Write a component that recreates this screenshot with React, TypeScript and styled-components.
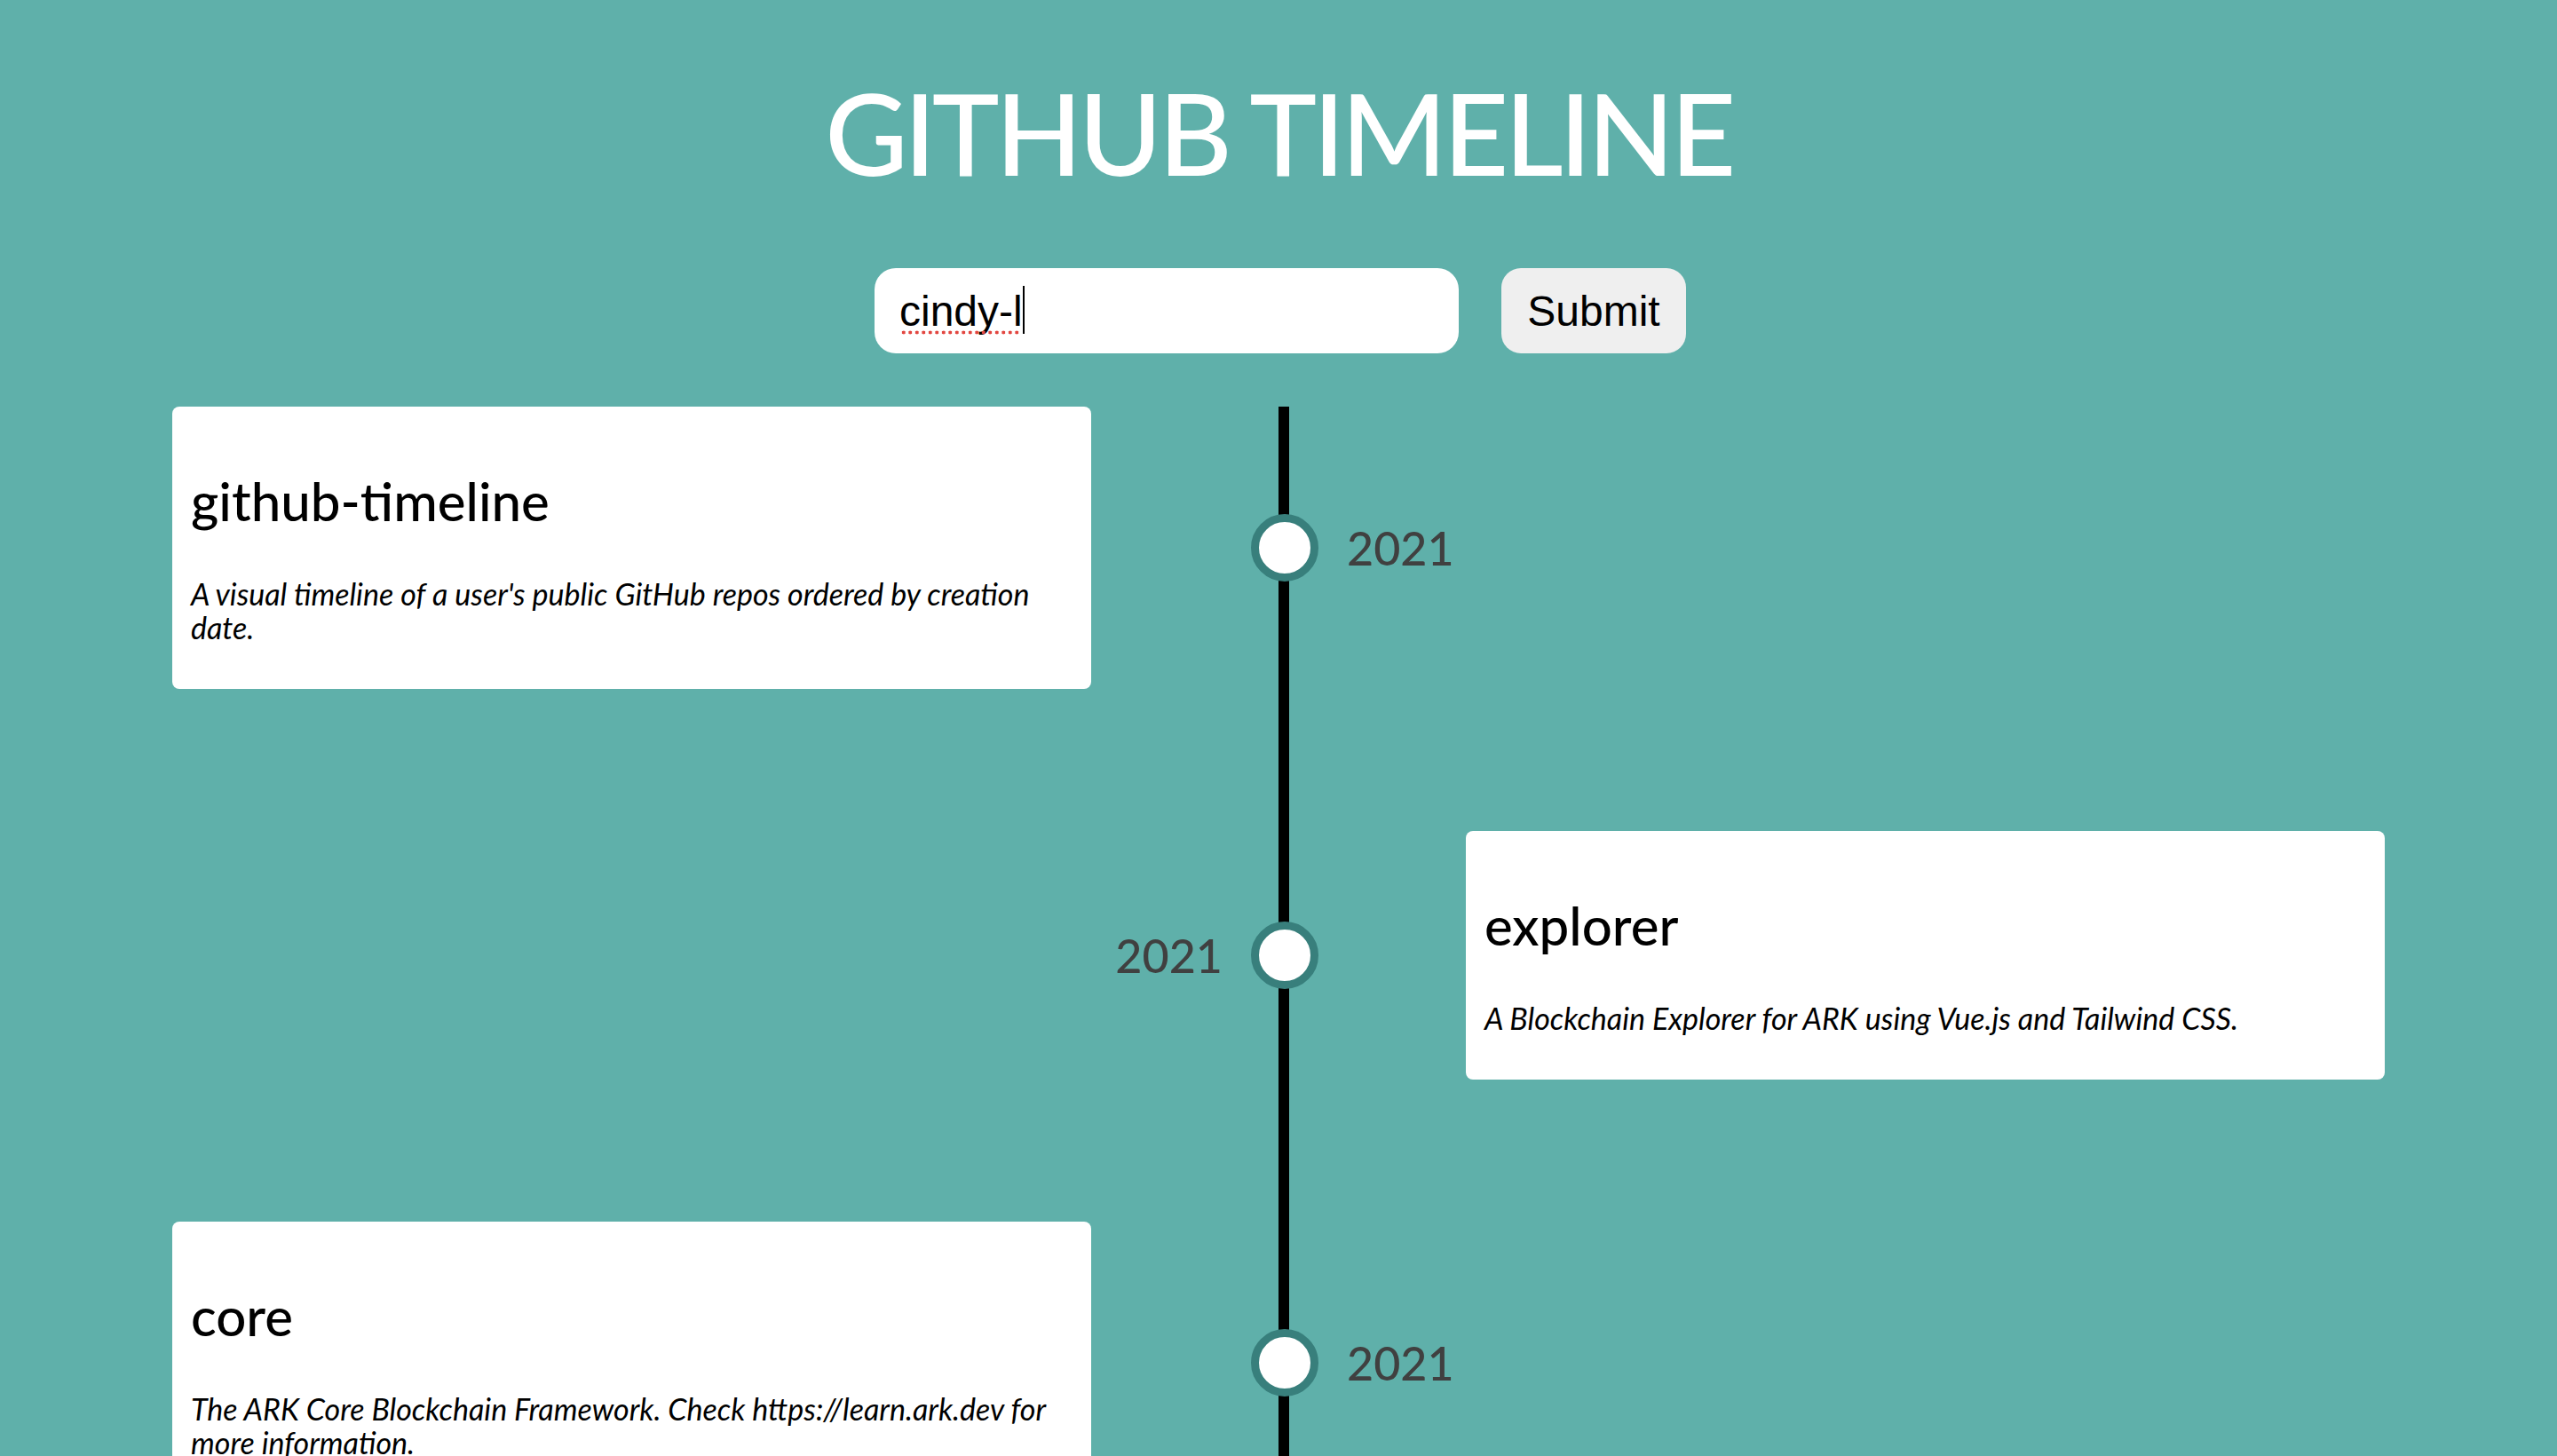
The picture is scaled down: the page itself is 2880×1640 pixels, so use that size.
import React from 'react';
import styled, { createGlobalStyle } from 'styled-components';

interface Repo {
    name: string;
    description: string;
    year: number;
}

const repos: Repo[] = [
    {
        name: 'github-timeline',
        description: "A visual timeline of a user's public GitHub repos ordered by creation date.",
        year: 2021,
    },
    {
        name: 'explorer',
        description: 'A Blockchain Explorer for ARK using Vue.js and Tailwind CSS.',
        year: 2021,
    },
    {
        name: 'core',
        description: 'The ARK Core Blockchain Framework. Check https://learn.ark.dev for more information.',
        year: 2021,
    },
];

const GlobalStyle = createGlobalStyle`
    html, body {
        margin: 0;
        padding: 0;
        background: #5fb0aa;
    }
    body {
        font-family: Lato, "Open Sans", sans-serif;
        overflow: hidden;
    }
`;

const Page = styled.div`
    min-height: 1640px;
    padding-top: 72px;
    box-sizing: border-box;
`;

const Title = styled.h1`
    margin: 0;
    text-align: center;
    color: #ffffff;
    font-size: 128px;
    line-height: 154px;
    font-weight: 500;
    letter-spacing: -4.5px;
`;

const SearchForm = styled.form`
    display: flex;
    justify-content: center;
    gap: 48px;
    margin: 76px 0 60px;
    padding-left: 4px;
`;

const InputWrap = styled.div`
    position: relative;
`;

const SearchInput = styled.input`
    display: block;
    width: 658px;
    height: 96px;
    box-sizing: border-box;
    border: none;
    border-radius: 24px;
    padding: 0 28px;
    font-family: "Liberation Sans", Arial, sans-serif;
    font-size: 48px;
    color: #000;
    background: #fff;
    outline: none;
    caret-color: transparent;
`;

// spell-check dots under the typed name
const Squiggle = styled.span`
    position: absolute;
    left: 29px;
    top: 70px;
    width: 136px;
    height: 5px;
    background-image: radial-gradient(circle, #e2453f 1.8px, transparent 2.2px);
    background-size: 7.5px 5px;
    pointer-events: none;
`;

const Caret = styled.span`
    position: absolute;
    left: 167px;
    top: 20px;
    width: 2px;
    height: 54px;
    background: #000;
    pointer-events: none;
`;

const SubmitButton = styled.button`
    height: 96px;
    width: 208px;
    border: none;
    border-radius: 22px;
    background: #efefef;
    font-family: "Liberation Sans", Arial, sans-serif;
    font-size: 48px;
    color: #000;
    padding: 0;
`;

const Timeline = styled.div`
    position: relative;
    margin: 0 194px;
    display: flex;
    flex-direction: column;
    gap: 160px;

    &::before {
        content: '';
        position: absolute;
        top: 0;
        bottom: -400px;
        left: 50%;
        width: 12px;
        background: #000;
    }
`;

const Row = styled.div`
    display: grid;
    grid-template-columns: 1fr 180px 76px 166px 1fr;
    align-items: center;
`;

const Card = styled.div<{ side: 'left' | 'right' }>`
    grid-column: ${(p) => (p.side === 'left' ? 1 : 5)};
    grid-row: 1;
    background: #fff;
    border-radius: 8px;
    padding: 20px 20px 20px 21px;
`;

const RepoName = styled.h2`
    margin: 50px 0;
    font-size: 60px;
    line-height: 72px;
    font-weight: 500;
    color: #000;
`;

const RepoDescription = styled.p`
    margin: 0 0 30px;
    font-size: 34px;
    line-height: 38px;
    font-style: italic;
    color: #000;
`;

const Dot = styled.div`
    grid-column: 3;
    grid-row: 1;
    position: relative;
    z-index: 1;
    width: 76px;
    height: 76px;
    box-sizing: border-box;
    border-radius: 50%;
    border: 9px solid #387f7c;
    background: #fff;
`;

const Year = styled.div<{ side: 'left' | 'right' }>`
    grid-column: ${(p) => (p.side === 'left' ? 2 : 4)};
    grid-row: 1;
    justify-self: ${(p) => (p.side === 'left' ? 'end' : 'start')};
    ${(p) => (p.side === 'left' ? 'padding-right: 32px;' : 'padding-left: 32px;')}
    font-size: 52px;
    font-weight: 500;
    color: #404040;
`;

const TimelineItem = ({ repo, index }: { repo: Repo; index: number }) => {
    const cardSide = index % 2 === 0 ? 'left' : 'right';
    const yearSide = cardSide === 'left' ? 'right' : 'left';
    return (
        <Row>
            <Card side={cardSide}>
                <RepoName>{repo.name}</RepoName>
                <RepoDescription>{repo.description}</RepoDescription>
            </Card>
            <Dot />
            <Year side={yearSide}>{repo.year}</Year>
        </Row>
    );
};

export default function App() {
    return (
        <Page>
            <GlobalStyle />
            <Title>GITHUB TIMELINE</Title>
            <SearchForm onSubmit={(e) => e.preventDefault()}>
                <InputWrap>
                    <SearchInput defaultValue="cindy-l" spellCheck={false} />
                    <Squiggle />
                    <Caret />
                </InputWrap>
                <SubmitButton type="submit">Submit</SubmitButton>
            </SearchForm>
            <Timeline>
                {repos.map((repo, i) => (
                    <TimelineItem key={repo.name} repo={repo} index={i} />
                ))}
            </Timeline>
        </Page>
    );
}
